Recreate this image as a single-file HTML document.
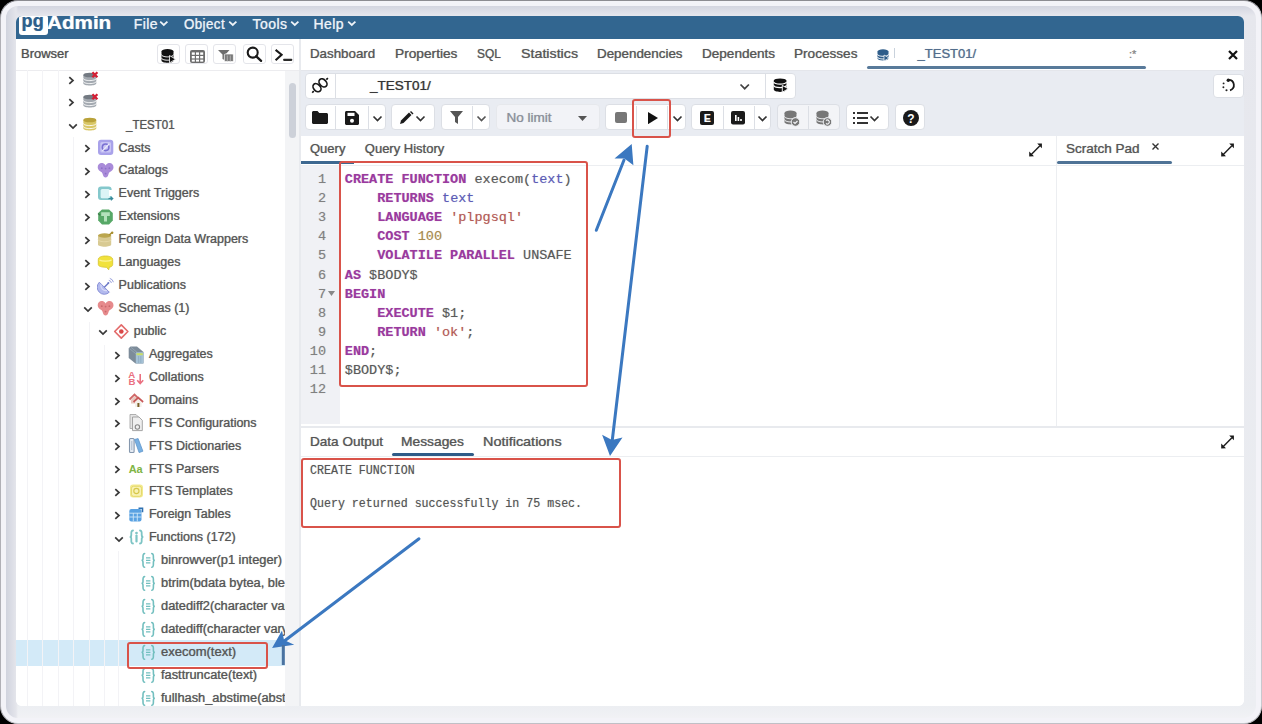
<!DOCTYPE html><html><head><meta charset="utf-8"><style>
html,body{margin:0;padding:0;}
body{width:1262px;height:724px;overflow:hidden;background:#000;position:relative;font-family:'Liberation Sans',sans-serif;}
.t{position:absolute;white-space:pre;-webkit-text-stroke:0.2px currentColor;text-shadow:0 0 0.8px color-mix(in srgb, currentColor 45%, transparent);}
.r{position:absolute;}
#frame{position:absolute;left:0;top:0;width:1262px;height:724px;box-sizing:border-box;border-radius:18px;background:#f3f3f8;border:1px solid #b0b0b6;border-top-color:#8c8c92;border-right-color:#c8c8ce;border-bottom-color:#c0c0c6;}
#bevel{position:absolute;left:6px;top:6px;width:1250px;height:712px;border-radius:13px;background:linear-gradient(180deg,#d3d5e0 0px,#e6e7ed 10px,#eceef2 700px,#f1f2f5 712px);}
#bevelL{position:absolute;left:6px;top:6px;width:12px;height:712px;border-radius:13px 0 0 13px;background:linear-gradient(90deg,#d0d3de 0px,#e4e5eb 10px,rgba(230,231,236,0) 12px);}
#app{position:absolute;left:0;top:0;width:1262px;height:724px;clip-path:inset(16px 18px 18px 16px round 6px);background:#fff;}
</style></head><body><div id="frame"></div><div id="bevel"></div><div id="bevelL"></div><div id="app">
<div class="r" style="left:16.0px;top:16.0px;width:1228.0px;height:23.0px;background:#326690;"></div>
<div class="r" style="left:19.0px;top:15.0px;width:29.0px;height:20.0px;background:#fff;border-radius:3px;"></div>
<div class="t" style="left:21.5px;top:12.0px;font:bold 18px/18px 'Liberation Sans',sans-serif;color:#2c5f8c;letter-spacing:0.2px;">pg</div>
<div class="t" style="left:46.5px;top:14.7px;font:bold 17.5px/17.5px 'Liberation Sans',sans-serif;color:#fff;transform:scaleX(1.1800);transform-origin:0 0;">Admin</div>
<div class="t" style="left:133.7px;top:16.9px;font:normal 14px/14px 'Liberation Sans',sans-serif;color:#eef3f8;letter-spacing:0.45px;">File</div>
<svg class="r" style="left:159.2px;top:19.5px;" width="10" height="7" viewBox="0 0 10 7"><polyline points="1.2,1.6 4.8,5 8.4,1.6" fill="none" stroke="#eef3f8" stroke-width="1.8"/></svg>
<div class="t" style="left:184.0px;top:16.9px;font:normal 14px/14px 'Liberation Sans',sans-serif;color:#eef3f8;letter-spacing:0.45px;transform:scaleX(0.9500);transform-origin:0 0;">Object</div>
<svg class="r" style="left:228.1px;top:19.5px;" width="10" height="7" viewBox="0 0 10 7"><polyline points="1.2,1.6 4.8,5 8.4,1.6" fill="none" stroke="#eef3f8" stroke-width="1.8"/></svg>
<div class="t" style="left:252.6px;top:16.9px;font:normal 14px/14px 'Liberation Sans',sans-serif;color:#eef3f8;letter-spacing:0.45px;">Tools</div>
<svg class="r" style="left:289.5px;top:19.5px;" width="10" height="7" viewBox="0 0 10 7"><polyline points="1.2,1.6 4.8,5 8.4,1.6" fill="none" stroke="#eef3f8" stroke-width="1.8"/></svg>
<div class="t" style="left:313.5px;top:16.9px;font:normal 14px/14px 'Liberation Sans',sans-serif;color:#eef3f8;letter-spacing:0.45px;">Help</div>
<svg class="r" style="left:346.5px;top:19.5px;" width="10" height="7" viewBox="0 0 10 7"><polyline points="1.2,1.6 4.8,5 8.4,1.6" fill="none" stroke="#eef3f8" stroke-width="1.8"/></svg>
<div class="r" style="left:16.0px;top:39.0px;width:284.0px;height:667.0px;background:#fff;"></div>
<div class="t" style="left:21.0px;top:47.0px;font:normal 13px/13px 'Liberation Sans',sans-serif;color:#505050;">Browser</div>
<div class="r" style="left:16.0px;top:69.5px;width:284.0px;height:1.0px;background:#ececef;"></div>
<div class="r" style="left:156.7px;top:43.8px;width:23.0px;height:20.7px;background:#fff;border:1px solid #e4e5ea;border-radius:3px;box-sizing:border-box;"></div>
<div class="r" style="left:184.6px;top:43.8px;width:23.0px;height:20.7px;background:#fff;border:1px solid #e4e5ea;border-radius:3px;box-sizing:border-box;"></div>
<div class="r" style="left:212.9px;top:43.8px;width:23.0px;height:20.7px;background:#fff;border:1px solid #e4e5ea;border-radius:3px;box-sizing:border-box;"></div>
<div class="r" style="left:243.1px;top:43.8px;width:23.0px;height:20.7px;background:#fff;border:1px solid #e4e5ea;border-radius:3px;box-sizing:border-box;"></div>
<div class="r" style="left:271.2px;top:43.8px;width:23.0px;height:20.7px;background:#fff;border:1px solid #e4e5ea;border-radius:3px;box-sizing:border-box;"></div>
<svg class="r" style="left:161.4px;top:48.7px;" width="15" height="14" viewBox="0 0 15 14"><ellipse cx="6.5" cy="2.3" rx="6" ry="2.2" fill="#111"/><path d="M0.5 2.3v9.2c0 1.3 2.7 2.3 6 2.3s6-1 6-2.3V2.3" fill="#111"/><path d="M0.5 5.6c0 1.3 2.7 2.3 6 2.3s6-1 6-2.3M0.5 8.9c0 1.3 2.7 2.3 6 2.3s6-1 6-2.3" stroke="#fff" stroke-width="1" fill="none"/><path d="M8.5 6.5l6 3.7-6 3.7z" fill="#111" stroke="#fff" stroke-width="0.8"/></svg>
<svg class="r" style="left:189.7px;top:50.4px;" width="15" height="13" viewBox="0 0 15 13"><rect x="0" y="0" width="15" height="13" rx="2" fill="#6d6d6d"/><g fill="#fff"><rect x="1.8" y="2.4" width="3" height="2.4"/><rect x="6" y="2.4" width="3" height="2.4"/><rect x="10.2" y="2.4" width="3" height="2.4"/><rect x="1.8" y="6" width="3" height="2.4"/><rect x="6" y="6" width="3" height="2.4"/><rect x="10.2" y="6" width="3" height="2.4"/><rect x="1.8" y="9.6" width="3" height="2"/><rect x="6" y="9.6" width="3" height="2"/><rect x="10.2" y="9.6" width="3" height="2"/></g></svg>
<svg class="r" style="left:218.3px;top:50.1px;" width="16" height="12" viewBox="0 0 16 12"><path d="M0 0h11.5l-4 4.5V10.5l-3-1.5V4.5z" fill="#6d6d6d"/><rect x="6.4" y="4" width="9" height="7.5" rx="1" fill="#7a7a7a" stroke="#fff" stroke-width="0.7"/><path d="M9.3 5.5v6M12.3 5.5v6" stroke="#bbb" stroke-width="0.8"/></svg>
<svg class="r" style="left:245.0px;top:44.5px;" width="18" height="18" viewBox="0 0 18 18"><circle cx="7.7" cy="7.6" r="5" fill="none" stroke="#1a1a1a" stroke-width="2.1"/><path d="M11.3 11.3l4.8 4.6" stroke="#1a1a1a" stroke-width="2.3" stroke-linecap="round"/></svg>
<svg class="r" style="left:273.5px;top:47.5px;" width="20" height="14" viewBox="0 0 20 14"><polyline points="1.6,1.9 7.6,6.7 1.6,12.2" fill="none" stroke="#1a1a1a" stroke-width="2.1" stroke-linejoin="miter"/><rect x="9.1" y="10.7" width="9.2" height="2.2" rx="0.8" fill="#2a2a2a"/></svg>
<div class="r" style="left:285.0px;top:70.5px;width:14.0px;height:635.5px;background:#f3f4f6;"></div>
<div class="r" style="left:289.3px;top:83.0px;width:7.2px;height:55.0px;background:#cdd1d9;border-radius:4px;"></div>
<div class="r" style="left:299.0px;top:39.0px;width:1.5px;height:667.0px;background:#e8eaee;"></div>
<div style="position:absolute;left:0;top:0;width:285px;height:706px;overflow:hidden;">
<div class="r" style="left:16.0px;top:640.4px;width:269.0px;height:25.9px;background:#d3eaf8;"></div>
<div class="r" style="left:26.5px;top:70.0px;width:1.0px;height:636.0px;background:#f3f3f6;"></div>
<div class="r" style="left:42.0px;top:70.0px;width:1.0px;height:636.0px;background:#f3f3f6;"></div>
<div class="r" style="left:57.5px;top:70.0px;width:1.0px;height:636.0px;background:#f3f3f6;"></div>
<div class="r" style="left:73.0px;top:137.0px;width:1.0px;height:569.0px;background:#f3f3f6;"></div>
<div class="r" style="left:88.5px;top:322.0px;width:1.0px;height:384.0px;background:#f3f3f6;"></div>
<div class="r" style="left:104.0px;top:345.0px;width:1.0px;height:361.0px;background:#f3f3f6;"></div>
<div class="r" style="left:118.3px;top:551.0px;width:1.0px;height:155.0px;background:#f3f3f6;"></div>
<svg class="r" style="left:68.4px;top:75.5px;" width="7" height="9" viewBox="0 0 7 9"><polyline points="1.3,1.2 5,4.5 1.3,7.8" fill="none" stroke="#3a3a3a" stroke-width="1.7" stroke-linejoin="miter"/></svg>
<svg class="r" style="left:82.3px;top:70.5px" width="18" height="18" viewBox="0 0 18 18"><g transform="translate(1,1)"><path d="M0.3 3v8.3c0 1.3 2.9 2.3 6.5 2.3s6.5-1 6.5-2.3V3z" fill="#a3a9b0"/><ellipse cx="6.8" cy="3" rx="6.5" ry="2.3" fill="#737a82"/><path d="M0.3 6.3c0 1.3 2.9 2.3 6.5 2.3s6.5-1 6.5-2.3M0.3 9.3c0 1.3 2.9 2.3 6.5 2.3s6.5-1 6.5-2.3" fill="none" stroke="#fff" stroke-width="0.9"/><path d="M9.4 0.2l5 5M14.4 0.2l-5 5" stroke="#d41f35" stroke-width="2.3"/></g></svg>
<svg class="r" style="left:68.4px;top:98.4px;" width="7" height="9" viewBox="0 0 7 9"><polyline points="1.3,1.2 5,4.5 1.3,7.8" fill="none" stroke="#3a3a3a" stroke-width="1.7" stroke-linejoin="miter"/></svg>
<svg class="r" style="left:82.3px;top:93.4px" width="18" height="18" viewBox="0 0 18 18"><g transform="translate(1,1)"><path d="M0.3 3v8.3c0 1.3 2.9 2.3 6.5 2.3s6.5-1 6.5-2.3V3z" fill="#a3a9b0"/><ellipse cx="6.8" cy="3" rx="6.5" ry="2.3" fill="#737a82"/><path d="M0.3 6.3c0 1.3 2.9 2.3 6.5 2.3s6.5-1 6.5-2.3M0.3 9.3c0 1.3 2.9 2.3 6.5 2.3s6.5-1 6.5-2.3" fill="none" stroke="#fff" stroke-width="0.9"/><path d="M9.4 0.2l5 5M14.4 0.2l-5 5" stroke="#d41f35" stroke-width="2.3"/></g></svg>
<svg class="r" style="left:67.9px;top:122.9px;" width="10" height="7" viewBox="0 0 10 7"><polyline points="1.2,1.3 5,5 8.8,1.3" fill="none" stroke="#3a3a3a" stroke-width="1.7"/></svg>
<svg class="r" style="left:82.3px;top:116.4px" width="18" height="18" viewBox="0 0 18 18"><g transform="translate(1,1)"><path d="M0.3 3v8.3c0 1.3 2.9 2.3 6.5 2.3s6.5-1 6.5-2.3V3z" fill="#d9c766"/><ellipse cx="6.8" cy="3" rx="6.5" ry="2.3" fill="#b9a23a"/><path d="M0.3 6.3c0 1.3 2.9 2.3 6.5 2.3s6.5-1 6.5-2.3M0.3 9.3c0 1.3 2.9 2.3 6.5 2.3s6.5-1 6.5-2.3" fill="none" stroke="#fff" stroke-width="0.9"/></g></svg>
<div class="t" style="left:125.5px;top:118.5px;font:normal 12.5px/12.5px 'Liberation Sans',sans-serif;color:#555;transform:scaleX(0.9200);transform-origin:0 0;">_TEST01</div>
<svg class="r" style="left:83.5px;top:144.3px;" width="7" height="9" viewBox="0 0 7 9"><polyline points="1.3,1.2 5,4.5 1.3,7.8" fill="none" stroke="#3a3a3a" stroke-width="1.7" stroke-linejoin="miter"/></svg>
<svg class="r" style="left:97.0px;top:139.3px" width="18" height="18" viewBox="0 0 18 18"><g transform="translate(1,1)"><rect x="0" y="-0.3" width="15.3" height="15.2" rx="3" fill="#a9a2ea"/><rect x="2.3" y="2" width="10.7" height="10.6" rx="1.5" fill="#c9c5f4"/><circle cx="7.6" cy="7.3" r="3.3" fill="none" stroke="#7a70d2" stroke-width="1.6"/><path d="M4.3 11l6.8-7" stroke="#ecebfc" stroke-width="1.1"/></g></svg>
<div class="t" style="left:118.6px;top:141.5px;font:normal 12.5px/12.5px 'Liberation Sans',sans-serif;color:#555;">Casts</div>
<svg class="r" style="left:83.5px;top:167.2px;" width="7" height="9" viewBox="0 0 7 9"><polyline points="1.3,1.2 5,4.5 1.3,7.8" fill="none" stroke="#3a3a3a" stroke-width="1.7" stroke-linejoin="miter"/></svg>
<svg class="r" style="left:97.0px;top:162.2px" width="18" height="18" viewBox="0 0 18 18"><g transform="translate(1,1)"><path d="M7.6 2.6C6.6 0.3 4.8 0 3.6 0 1.4 0 -0.3 1.8 -0.3 4.2c0 2.4 1.6 3.6 3.2 4.6 1.3.8 1.6 1.6 1.9 2.8.4 1.8 1.5 3 2.8 3s2.4-1.2 2.8-3c.3-1.2.6-2 1.9-2.8 1.6-1 3.2-2.2 3.2-4.6C15.5 1.8 13.8 0 11.6 0 10.4 0 8.6.3 7.6 2.6z" fill="#a98bd9"/><g fill="#8d70c8"><circle cx="3.8" cy="5.2" r="0.9"/><circle cx="7.6" cy="5.6" r="0.9"/><circle cx="11.4" cy="5.2" r="0.9"/><circle cx="7.6" cy="10.6" r="0.9"/></g></g></svg>
<div class="t" style="left:118.6px;top:164.4px;font:normal 12.5px/12.5px 'Liberation Sans',sans-serif;color:#555;">Catalogs</div>
<svg class="r" style="left:83.5px;top:190.2px;" width="7" height="9" viewBox="0 0 7 9"><polyline points="1.3,1.2 5,4.5 1.3,7.8" fill="none" stroke="#3a3a3a" stroke-width="1.7" stroke-linejoin="miter"/></svg>
<svg class="r" style="left:97.0px;top:185.2px" width="18" height="18" viewBox="0 0 18 18"><g transform="translate(1,1)"><rect x="0" y="0.5" width="13.6" height="13.6" rx="3" fill="#84c8cc"/><rect x="2.6" y="3" width="9.3" height="9.3" rx="1.5" fill="#dcf4f6"/><rect x="11" y="4" width="4" height="6" fill="#fff"/><path d="M10.5 12.6h3.5M12.8 11l1.8 1.6-1.8 1.6" fill="none" stroke="#3b8a9a" stroke-width="1.4"/></g></svg>
<div class="t" style="left:118.6px;top:187.3px;font:normal 12.5px/12.5px 'Liberation Sans',sans-serif;color:#555;">Event Triggers</div>
<svg class="r" style="left:83.5px;top:213.1px;" width="7" height="9" viewBox="0 0 7 9"><polyline points="1.3,1.2 5,4.5 1.3,7.8" fill="none" stroke="#3a3a3a" stroke-width="1.7" stroke-linejoin="miter"/></svg>
<svg class="r" style="left:97.0px;top:208.1px" width="18" height="18" viewBox="0 0 18 18"><g transform="translate(1,1)"><path d="M4 0.5h7l3.8 3.5v7.5L11 15.5H4L0.2 11.5V4z" fill="#57a867"/><path d="M3.2 3.3h8.6v3.6H9v5.6H6V6.9H3.2z" fill="#b4e2bb"/><path d="M0 4.5l2.2 1.8" stroke="#3c7a48" stroke-width="1.2"/></g></svg>
<div class="t" style="left:118.6px;top:210.3px;font:normal 12.5px/12.5px 'Liberation Sans',sans-serif;color:#555;">Extensions</div>
<svg class="r" style="left:83.5px;top:236.0px;" width="7" height="9" viewBox="0 0 7 9"><polyline points="1.3,1.2 5,4.5 1.3,7.8" fill="none" stroke="#3a3a3a" stroke-width="1.7" stroke-linejoin="miter"/></svg>
<svg class="r" style="left:97.0px;top:231.0px" width="18" height="18" viewBox="0 0 18 18"><g transform="translate(1,1)"><path d="M0 3.5v9c0 1.3 3 2.2 6.6 2.2s6.6-.9 6.6-2.2v-9z" fill="#d8ca93"/><ellipse cx="6.6" cy="3.5" rx="6.6" ry="2.2" fill="#bba64e"/><path d="M0 7.5c0 1.3 3 2.2 6.6 2.2s6.6-.9 6.6-2.2" fill="none" stroke="#e8dcae" stroke-width="0.8"/><path d="M11.2 3l2.8-2.4" stroke="#a88f2e" stroke-width="1.5"/><circle cx="14.2" cy="0.8" r="1.2" fill="#a88f2e"/></g></svg>
<div class="t" style="left:118.6px;top:233.2px;font:normal 12.5px/12.5px 'Liberation Sans',sans-serif;color:#555;">Foreign Data Wrappers</div>
<svg class="r" style="left:83.5px;top:258.9px;" width="7" height="9" viewBox="0 0 7 9"><polyline points="1.3,1.2 5,4.5 1.3,7.8" fill="none" stroke="#3a3a3a" stroke-width="1.7" stroke-linejoin="miter"/></svg>
<svg class="r" style="left:97.0px;top:253.9px" width="18" height="18" viewBox="0 0 18 18"><g transform="translate(1,1)"><path d="M0.3 4.5C0.3 2.2 3.4 1 7.5 1s7.2 1.2 7.2 3.5v5c0 1.6-1.7 2.5-3.4 2.7l-0.6 2.6-2.2-2.5C3.6 12.2 0.3 11.4 0.3 9.5z" fill="#f1e23c" stroke="#d5c42c" stroke-width="0.8"/><path d="M1.5 5.2c2.5 1.2 9.5 1.2 12 0" stroke="#fbf49a" stroke-width="1.3" fill="none"/></g></svg>
<div class="t" style="left:118.6px;top:256.1px;font:normal 12.5px/12.5px 'Liberation Sans',sans-serif;color:#555;">Languages</div>
<svg class="r" style="left:83.5px;top:281.9px;" width="7" height="9" viewBox="0 0 7 9"><polyline points="1.3,1.2 5,4.5 1.3,7.8" fill="none" stroke="#3a3a3a" stroke-width="1.7" stroke-linejoin="miter"/></svg>
<svg class="r" style="left:97.0px;top:276.9px" width="18" height="18" viewBox="0 0 18 18"><g transform="translate(1,1)"><path d="M1.3 4.2A7 7 0 0 0 11.3 14.2Z" fill="#b3baee" stroke="#8890d6" stroke-width="1"/><path d="M3 6.5A5 5 0 0 0 9 12.5" fill="none" stroke="#d8dcf8" stroke-width="1.2"/><path d="M6.3 9.2l4-4" stroke="#6c78c6" stroke-width="1.4"/><circle cx="10.4" cy="5.1" r="1" fill="#6c78c6"/><path d="M10.8 2.4a3 3 0 0 1 2.6 2.6M11.8 0.4a5 5 0 0 1 3.6 3.8" fill="none" stroke="#9aa2dc" stroke-width="1"/></g></svg>
<div class="t" style="left:118.6px;top:279.0px;font:normal 12.5px/12.5px 'Liberation Sans',sans-serif;color:#555;">Publications</div>
<svg class="r" style="left:83.0px;top:306.3px;" width="10" height="7" viewBox="0 0 10 7"><polyline points="1.2,1.3 5,5 8.8,1.3" fill="none" stroke="#3a3a3a" stroke-width="1.7"/></svg>
<svg class="r" style="left:97.0px;top:299.8px" width="18" height="18" viewBox="0 0 18 18"><g transform="translate(1,1)"><path d="M7.6 2.6C6.6 0.3 4.8 0 3.6 0 1.4 0 -0.3 1.8 -0.3 4.2c0 2.4 1.6 3.6 3.2 4.6 1.3.8 1.6 1.6 1.9 2.8.4 1.8 1.5 3 2.8 3s2.4-1.2 2.8-3c.3-1.2.6-2 1.9-2.8 1.6-1 3.2-2.2 3.2-4.6C15.5 1.8 13.8 0 11.6 0 10.4 0 8.6.3 7.6 2.6z" fill="#e68a8c"/><g fill="#c96a6c"><circle cx="3.8" cy="5.2" r="0.9"/><circle cx="7.6" cy="5.6" r="0.9"/><circle cx="11.4" cy="5.2" r="0.9"/><circle cx="7.6" cy="10.6" r="0.9"/></g></g></svg>
<div class="t" style="left:118.6px;top:302.0px;font:normal 12.5px/12.5px 'Liberation Sans',sans-serif;color:#555;">Schemas (1)</div>
<svg class="r" style="left:97.5px;top:329.2px;" width="10" height="7" viewBox="0 0 10 7"><polyline points="1.2,1.3 5,5 8.8,1.3" fill="none" stroke="#3a3a3a" stroke-width="1.7"/></svg>
<svg class="r" style="left:113.0px;top:322.7px" width="18" height="18" viewBox="0 0 18 18"><g transform="translate(1,1)"><path d="M7.3 0.9l6.6 6.6-6.6 6.6L0.7 7.5z" fill="#fff" stroke="#e36a6a" stroke-width="1.6" stroke-linejoin="round"/><circle cx="7.3" cy="7.5" r="2.3" fill="#d94848"/></g></svg>
<div class="t" style="left:133.7px;top:324.9px;font:normal 12.5px/12.5px 'Liberation Sans',sans-serif;color:#555;">public</div>
<svg class="r" style="left:114.3px;top:350.7px;" width="7" height="9" viewBox="0 0 7 9"><polyline points="1.3,1.2 5,4.5 1.3,7.8" fill="none" stroke="#3a3a3a" stroke-width="1.7" stroke-linejoin="miter"/></svg>
<svg class="r" style="left:128.0px;top:345.7px" width="18" height="18" viewBox="0 0 18 18"><g transform="translate(1,1)"><path d="M1.5 -0.5h6.5l6.5 5.5v11.5H6.5L-0.3 11V1.3z" fill="#7d8c9a"/><path d="M0.5 1.5l6 5M2 0.3l6 5" stroke="#9cadbb" stroke-width="0.7"/><rect x="6.8" y="5.2" width="7.7" height="11.2" rx="1" fill="#a6c2d6"/><rect x="7.5" y="6.2" width="6.3" height="2" fill="#c9de63"/><path d="M9.6 9v7M11.8 9v7" stroke="#8aa8be" stroke-width="0.7"/></g></svg>
<div class="t" style="left:148.9px;top:347.8px;font:normal 12.5px/12.5px 'Liberation Sans',sans-serif;color:#555;">Aggregates</div>
<svg class="r" style="left:114.3px;top:373.6px;" width="7" height="9" viewBox="0 0 7 9"><polyline points="1.3,1.2 5,4.5 1.3,7.8" fill="none" stroke="#3a3a3a" stroke-width="1.7" stroke-linejoin="miter"/></svg>
<svg class="r" style="left:128.0px;top:368.6px" width="18" height="18" viewBox="0 0 18 18"><g transform="translate(1,1)"><text x="-0.8" y="7.6" font-family="Liberation Sans" font-weight="bold" font-size="9.6" fill="#ea7080">A</text><text x="-0.6" y="15.4" font-family="Liberation Sans" font-weight="bold" font-size="9.6" fill="#ea7080">B</text><path d="M11.2 4v9.3M8.2 10.3l3 3.2 3-3.2" fill="none" stroke="#ea7080" stroke-width="1.6"/></g></svg>
<div class="t" style="left:148.9px;top:370.8px;font:normal 12.5px/12.5px 'Liberation Sans',sans-serif;color:#555;">Collations</div>
<svg class="r" style="left:114.3px;top:396.5px;" width="7" height="9" viewBox="0 0 7 9"><polyline points="1.3,1.2 5,4.5 1.3,7.8" fill="none" stroke="#3a3a3a" stroke-width="1.7" stroke-linejoin="miter"/></svg>
<svg class="r" style="left:128.0px;top:391.5px" width="18" height="18" viewBox="0 0 18 18"><g transform="translate(1,1)"><path d="M0.5 6.5l5-5 5 5" fill="none" stroke="#d06868" stroke-width="1.8"/><path d="M2 6.5v4h7v-4L5.5 3z" fill="#e8c8c0"/><path d="M4.5 9l4.8-4.2 4.8 4.2" fill="none" stroke="#c85858" stroke-width="1.8"/><path d="M6 9v5h6.6V9L9.3 6z" fill="#f4f0ea"/><rect x="8.4" y="10" width="2" height="4" fill="#7a6028"/></g></svg>
<div class="t" style="left:148.9px;top:393.7px;font:normal 12.5px/12.5px 'Liberation Sans',sans-serif;color:#555;">Domains</div>
<svg class="r" style="left:114.3px;top:419.4px;" width="7" height="9" viewBox="0 0 7 9"><polyline points="1.3,1.2 5,4.5 1.3,7.8" fill="none" stroke="#3a3a3a" stroke-width="1.7" stroke-linejoin="miter"/></svg>
<svg class="r" style="left:128.0px;top:414.4px" width="18" height="18" viewBox="0 0 18 18"><g transform="translate(1,1)"><path d="M1 -0.5h6l3 3v11H1z" fill="#e4e4e4" stroke="#a8a8a8" stroke-width="0.9"/><path d="M3.5 2h6.5l3.3 3.3v10.3H3.5z" fill="#efefef" stroke="#9c9c9c" stroke-width="0.9"/><circle cx="8.4" cy="12" r="2.2" fill="none" stroke="#888" stroke-width="1.1"/></g></svg>
<div class="t" style="left:148.9px;top:416.6px;font:normal 12.5px/12.5px 'Liberation Sans',sans-serif;color:#555;">FTS Configurations</div>
<svg class="r" style="left:114.3px;top:442.4px;" width="7" height="9" viewBox="0 0 7 9"><polyline points="1.3,1.2 5,4.5 1.3,7.8" fill="none" stroke="#3a3a3a" stroke-width="1.7" stroke-linejoin="miter"/></svg>
<svg class="r" style="left:128.0px;top:437.4px" width="18" height="18" viewBox="0 0 18 18"><g transform="translate(1,1)"><rect x="0.5" y="0.5" width="4.6" height="14" rx="1" fill="#e4eaf2" stroke="#8597ad" stroke-width="1.1"/><path d="M2.8 3v9" stroke="#a8b8cc" stroke-width="1"/><path d="M5.5 1.5l3.6-0.9 4.8 12.6-3.8 1.4z" fill="#78b0e2" stroke="#5f95cc" stroke-width="0.8"/></g></svg>
<div class="t" style="left:148.9px;top:439.6px;font:normal 12.5px/12.5px 'Liberation Sans',sans-serif;color:#555;">FTS Dictionaries</div>
<svg class="r" style="left:114.3px;top:465.3px;" width="7" height="9" viewBox="0 0 7 9"><polyline points="1.3,1.2 5,4.5 1.3,7.8" fill="none" stroke="#3a3a3a" stroke-width="1.7" stroke-linejoin="miter"/></svg>
<svg class="r" style="left:128.0px;top:460.3px" width="18" height="18" viewBox="0 0 18 18"><g transform="translate(1,1)"><text x="-0.2" y="12" font-family="Liberation Sans" font-weight="bold" font-size="11" fill="#7fb545" letter-spacing="-0.2">Aa</text></g></svg>
<div class="t" style="left:148.9px;top:462.5px;font:normal 12.5px/12.5px 'Liberation Sans',sans-serif;color:#555;">FTS Parsers</div>
<svg class="r" style="left:114.3px;top:488.2px;" width="7" height="9" viewBox="0 0 7 9"><polyline points="1.3,1.2 5,4.5 1.3,7.8" fill="none" stroke="#3a3a3a" stroke-width="1.7" stroke-linejoin="miter"/></svg>
<svg class="r" style="left:128.0px;top:483.2px" width="18" height="18" viewBox="0 0 18 18"><g transform="translate(1,1)"><rect x="1" y="0.5" width="13" height="13" rx="3" fill="#f2ea8e"/><rect x="2.5" y="2.3" width="10" height="10" rx="2" fill="#f8f2b4" stroke="#e0d260" stroke-width="0.8"/><circle cx="7.4" cy="7" r="2.6" fill="none" stroke="#d6c648" stroke-width="1.1"/></g></svg>
<div class="t" style="left:148.9px;top:485.4px;font:normal 12.5px/12.5px 'Liberation Sans',sans-serif;color:#555;">FTS Templates</div>
<svg class="r" style="left:114.3px;top:511.2px;" width="7" height="9" viewBox="0 0 7 9"><polyline points="1.3,1.2 5,4.5 1.3,7.8" fill="none" stroke="#3a3a3a" stroke-width="1.7" stroke-linejoin="miter"/></svg>
<svg class="r" style="left:128.0px;top:506.2px" width="18" height="18" viewBox="0 0 18 18"><g transform="translate(1,1)"><rect x="0.3" y="2" width="12.2" height="12.6" rx="2" fill="#5aa2e2"/><path d="M0.3 6.2h12.2M0.3 10h12.2M4.3 6v8.5M8.3 6v8.5" stroke="#cfe6f8" stroke-width="0.9"/><path d="M9.5 1.2h4v4" fill="none" stroke="#2f70b0" stroke-width="1.6"/></g></svg>
<div class="t" style="left:148.9px;top:508.3px;font:normal 12.5px/12.5px 'Liberation Sans',sans-serif;color:#555;">Foreign Tables</div>
<svg class="r" style="left:113.8px;top:535.6px;" width="10" height="7" viewBox="0 0 10 7"><polyline points="1.2,1.3 5,5 8.8,1.3" fill="none" stroke="#3a3a3a" stroke-width="1.7"/></svg>
<svg class="r" style="left:128.0px;top:529.1px" width="18" height="18" viewBox="0 0 18 18"><g transform="translate(1,1)" fill="none" stroke="#7cc4c4" stroke-width="1.8" stroke-linecap="round"><path d="M4 0.5C2 0.5 2.3 3 2.3 5S1.5 7 0.7 7c.8 0 1.6 0 1.6 2s-.3 4.5 1.7 4.5"/><path d="M11 0.5c2 0 1.7 2.5 1.7 4.5S13.5 7 14.3 7c-.8 0-1.6 0-1.6 2s.3 4.5-1.7 4.5"/><path d="M7.5 5.5v6" stroke-width="2.2"/><circle cx="7.5" cy="3" r="0.6" stroke-width="1.5"/></g></svg>
<div class="t" style="left:148.9px;top:531.3px;font:normal 12.5px/12.5px 'Liberation Sans',sans-serif;color:#555;">Functions (172)</div>
<svg class="r" style="left:139.6px;top:552.0px" width="18" height="18" viewBox="0 0 18 18"><g transform="translate(1,1)" fill="none" stroke="#72bfbf" stroke-width="1.6" stroke-linecap="round"><path d="M3.6 0.6C1.8 0.6 2 3 2 5.2S1.3 7.2 0.5 7.2c.8 0 1.5 0 1.5 2.2s-.2 4.8 1.6 4.8"/><path d="M10.8 0.6c1.8 0 1.6 2.4 1.6 4.6s.7 2 1.5 2c-.8 0-1.5 0-1.5 2.2s.2 4.8-1.6 4.8"/><path d="M5 4.8h4.4M5 7.3h4.4M5 9.8h4.4" stroke-width="1.2" stroke-linecap="butt"/></g></svg>
<div class="t" style="left:160.5px;top:554.2px;font:normal 12.5px/12.5px 'Liberation Sans',sans-serif;color:#555;transform:scaleX(1.0250);transform-origin:0 0;">binrowver(p1 integer)</div>
<svg class="r" style="left:139.6px;top:575.0px" width="18" height="18" viewBox="0 0 18 18"><g transform="translate(1,1)" fill="none" stroke="#72bfbf" stroke-width="1.6" stroke-linecap="round"><path d="M3.6 0.6C1.8 0.6 2 3 2 5.2S1.3 7.2 0.5 7.2c.8 0 1.5 0 1.5 2.2s-.2 4.8 1.6 4.8"/><path d="M10.8 0.6c1.8 0 1.6 2.4 1.6 4.6s.7 2 1.5 2c-.8 0-1.5 0-1.5 2.2s.2 4.8-1.6 4.8"/><path d="M5 4.8h4.4M5 7.3h4.4M5 9.8h4.4" stroke-width="1.2" stroke-linecap="butt"/></g></svg>
<div class="t" style="left:160.5px;top:577.1px;font:normal 12.5px/12.5px 'Liberation Sans',sans-serif;color:#555;transform:scaleX(1.0250);transform-origin:0 0;">btrim(bdata bytea, blen integer)</div>
<svg class="r" style="left:139.6px;top:597.9px" width="18" height="18" viewBox="0 0 18 18"><g transform="translate(1,1)" fill="none" stroke="#72bfbf" stroke-width="1.6" stroke-linecap="round"><path d="M3.6 0.6C1.8 0.6 2 3 2 5.2S1.3 7.2 0.5 7.2c.8 0 1.5 0 1.5 2.2s-.2 4.8 1.6 4.8"/><path d="M10.8 0.6c1.8 0 1.6 2.4 1.6 4.6s.7 2 1.5 2c-.8 0-1.5 0-1.5 2.2s.2 4.8-1.6 4.8"/><path d="M5 4.8h4.4M5 7.3h4.4M5 9.8h4.4" stroke-width="1.2" stroke-linecap="butt"/></g></svg>
<div class="t" style="left:160.5px;top:600.1px;font:normal 12.5px/12.5px 'Liberation Sans',sans-serif;color:#555;transform:scaleX(1.0250);transform-origin:0 0;">datediff2(character varying)</div>
<svg class="r" style="left:139.6px;top:620.8px" width="18" height="18" viewBox="0 0 18 18"><g transform="translate(1,1)" fill="none" stroke="#72bfbf" stroke-width="1.6" stroke-linecap="round"><path d="M3.6 0.6C1.8 0.6 2 3 2 5.2S1.3 7.2 0.5 7.2c.8 0 1.5 0 1.5 2.2s-.2 4.8 1.6 4.8"/><path d="M10.8 0.6c1.8 0 1.6 2.4 1.6 4.6s.7 2 1.5 2c-.8 0-1.5 0-1.5 2.2s.2 4.8-1.6 4.8"/><path d="M5 4.8h4.4M5 7.3h4.4M5 9.8h4.4" stroke-width="1.2" stroke-linecap="butt"/></g></svg>
<div class="t" style="left:160.5px;top:623.0px;font:normal 12.5px/12.5px 'Liberation Sans',sans-serif;color:#555;transform:scaleX(1.0250);transform-origin:0 0;">datediff(character varying)</div>
<svg class="r" style="left:139.6px;top:643.8px" width="18" height="18" viewBox="0 0 18 18"><g transform="translate(1,1)" fill="none" stroke="#72bfbf" stroke-width="1.6" stroke-linecap="round"><path d="M3.6 0.6C1.8 0.6 2 3 2 5.2S1.3 7.2 0.5 7.2c.8 0 1.5 0 1.5 2.2s-.2 4.8 1.6 4.8"/><path d="M10.8 0.6c1.8 0 1.6 2.4 1.6 4.6s.7 2 1.5 2c-.8 0-1.5 0-1.5 2.2s.2 4.8-1.6 4.8"/><path d="M5 4.8h4.4M5 7.3h4.4M5 9.8h4.4" stroke-width="1.2" stroke-linecap="butt"/></g></svg>
<div class="t" style="left:160.5px;top:645.9px;font:normal 12.5px/12.5px 'Liberation Sans',sans-serif;color:#555;transform:scaleX(1.0400);transform-origin:0 0;">execom(text)</div>
<svg class="r" style="left:139.6px;top:666.7px" width="18" height="18" viewBox="0 0 18 18"><g transform="translate(1,1)" fill="none" stroke="#72bfbf" stroke-width="1.6" stroke-linecap="round"><path d="M3.6 0.6C1.8 0.6 2 3 2 5.2S1.3 7.2 0.5 7.2c.8 0 1.5 0 1.5 2.2s-.2 4.8 1.6 4.8"/><path d="M10.8 0.6c1.8 0 1.6 2.4 1.6 4.6s.7 2 1.5 2c-.8 0-1.5 0-1.5 2.2s.2 4.8-1.6 4.8"/><path d="M5 4.8h4.4M5 7.3h4.4M5 9.8h4.4" stroke-width="1.2" stroke-linecap="butt"/></g></svg>
<div class="t" style="left:160.5px;top:668.9px;font:normal 12.5px/12.5px 'Liberation Sans',sans-serif;color:#555;transform:scaleX(1.0250);transform-origin:0 0;">fasttruncate(text)</div>
<svg class="r" style="left:139.6px;top:689.6px" width="18" height="18" viewBox="0 0 18 18"><g transform="translate(1,1)" fill="none" stroke="#72bfbf" stroke-width="1.6" stroke-linecap="round"><path d="M3.6 0.6C1.8 0.6 2 3 2 5.2S1.3 7.2 0.5 7.2c.8 0 1.5 0 1.5 2.2s-.2 4.8 1.6 4.8"/><path d="M10.8 0.6c1.8 0 1.6 2.4 1.6 4.6s.7 2 1.5 2c-.8 0-1.5 0-1.5 2.2s.2 4.8-1.6 4.8"/><path d="M5 4.8h4.4M5 7.3h4.4M5 9.8h4.4" stroke-width="1.2" stroke-linecap="butt"/></g></svg>
<div class="t" style="left:160.5px;top:691.8px;font:normal 12.5px/12.5px 'Liberation Sans',sans-serif;color:#555;transform:scaleX(1.0250);transform-origin:0 0;">fullhash_abstime(abstime)</div>
</div>
<div class="r" style="left:300.5px;top:39.0px;width:943.5px;height:31.0px;background:#fff;"></div>
<div class="t" style="left:310.1px;top:47.2px;font:normal 13px/13px 'Liberation Sans',sans-serif;color:#555;transform:scaleX(1.0250);transform-origin:0 0;">Dashboard</div>
<div class="t" style="left:394.9px;top:47.2px;font:normal 13px/13px 'Liberation Sans',sans-serif;color:#555;transform:scaleX(1.0540);transform-origin:0 0;">Properties</div>
<div class="t" style="left:477.0px;top:47.2px;font:normal 13px/13px 'Liberation Sans',sans-serif;color:#555;transform:scaleX(0.9150);transform-origin:0 0;">SQL</div>
<div class="t" style="left:521.0px;top:47.2px;font:normal 13px/13px 'Liberation Sans',sans-serif;color:#555;transform:scaleX(1.0960);transform-origin:0 0;">Statistics</div>
<div class="t" style="left:597.1px;top:47.2px;font:normal 13px/13px 'Liberation Sans',sans-serif;color:#555;transform:scaleX(1.0290);transform-origin:0 0;">Dependencies</div>
<div class="t" style="left:701.5px;top:47.2px;font:normal 13px/13px 'Liberation Sans',sans-serif;color:#555;transform:scaleX(1.0430);transform-origin:0 0;">Dependents</div>
<div class="t" style="left:793.5px;top:47.2px;font:normal 13px/13px 'Liberation Sans',sans-serif;color:#555;transform:scaleX(1.0450);transform-origin:0 0;">Processes</div>
<div class="r" style="left:867.0px;top:66.0px;width:279.0px;height:3.0px;background:#587a9a;border-radius:1.5px;"></div>
<div class="t" style="left:917.6px;top:47.2px;font:normal 13px/13px 'Liberation Sans',sans-serif;color:#526d8c;">_TEST01/</div>
<div class="t" style="left:1129.0px;top:48.9px;font:normal 11px/11px 'Liberation Sans',sans-serif;color:#888;">:*</div>
<div class="r" style="left:893.5px;top:48.0px;width:1.0px;height:10.0px;background:#c9d2dc;"></div>
<svg class="r" style="left:876.7px;top:48.8px;" width="13" height="12" viewBox="0 0 13 12"><ellipse cx="6" cy="2.5" rx="5.5" ry="2.2" fill="#2f5d8a"/><path d="M0.5 2.5v7c0 1.2 2.5 2 5.5 2s5.5-.8 5.5-2v-7" fill="#2f5d8a"/><path d="M0.5 5.3c0 1.2 2.5 2 5.5 2s5.5-.8 5.5-2M0.5 8c0 1.2 2.5 2 5.5 2s5.5-.8 5.5-2" stroke="#fff" stroke-width="0.9" fill="none"/><path d="M7 6l5 3-5 3z" fill="#2f5d8a" stroke="#fff" stroke-width="0.7"/></svg>
<svg class="r" style="left:1227.5px;top:50.0px;" width="10" height="10" viewBox="0 0 10 10"><path d="M1 1l8 8M9 1l-8 8" stroke="#111" stroke-width="2.2"/></svg>
<div class="r" style="left:300.5px;top:69.5px;width:943.5px;height:1.0px;background:#e4e6eb;"></div>
<div class="r" style="left:300.5px;top:70.5px;width:943.5px;height:65.0px;background:#e9ecf2;"></div>
<div class="r" style="left:304.8px;top:73.0px;width:491.2px;height:25.6px;background:#fff;border:1px solid #dcdfe5;border-radius:4px;box-sizing:border-box;"></div>
<div class="r" style="left:335.2px;top:74.0px;width:1.0px;height:24.5px;background:#dcdfe5;"></div>
<div class="r" style="left:765.0px;top:74.0px;width:1.0px;height:24.5px;background:#dcdfe5;"></div>
<div class="t" style="left:370.0px;top:79.0px;font:normal 13.5px/13.5px 'Liberation Sans',sans-serif;color:#333;">_TEST01/</div>
<svg class="r" style="left:739.0px;top:82.5px;" width="12" height="8" viewBox="0 0 12 8"><polyline points="1.5,1.5 5.7,5.7 9.9,1.5" fill="none" stroke="#444" stroke-width="1.7"/></svg>
<svg class="r" style="left:773.0px;top:77.5px;" width="16" height="16" viewBox="0 0 16 16"><path d="M0.8 2.6v9c0 1.3 2.8 2.3 6.3 2.3s6.3-1 6.3-2.3v-9z" fill="#111"/><ellipse cx="7.1" cy="2.6" rx="6.3" ry="2.2" fill="#111"/><path d="M0.8 3.9c0 1.3 2.8 2.3 6.3 2.3s6.3-1 6.3-2.3M0.8 7.3c0 1.3 2.8 2.3 6.3 2.3s6.3-1 6.3-2.3" stroke="#fff" stroke-width="1.2" fill="none"/><path d="M9.3 7.4l6 3.4-6 3.4z" fill="#111" stroke="#fff" stroke-width="0.9"/></svg>
<svg class="r" style="left:310.0px;top:76.0px;" width="20" height="20" viewBox="0 0 20 20"><g fill="none" stroke="#1a1a1a" stroke-width="1.7"><ellipse cx="13" cy="6.9" rx="4.6" ry="3.3" transform="rotate(45 13 6.9)"/><ellipse cx="7" cy="11.7" rx="4.6" ry="3.3" transform="rotate(45 7 11.7)"/><path d="M16.3 3.7l1.6-1.6M3.7 15l-1.4 1.8"/></g></svg>
<div class="r" style="left:1212.5px;top:73.5px;width:31.1px;height:24.8px;background:#fff;border:1px solid #dcdfe5;border-radius:4px;box-sizing:border-box;"></div>
<svg class="r" style="left:1220.0px;top:77.0px;" width="18" height="18" viewBox="0 0 18 18"><path d="M8.6 2.9A5.3 5.3 0 0 1 10 13.3" fill="none" stroke="#1a1a1a" stroke-width="1.8"/><circle cx="8.3" cy="3.3" r="1.7" fill="#1a1a1a"/><circle cx="3.6" cy="6.4" r="0.95" fill="#222"/><circle cx="3.4" cy="10.2" r="0.95" fill="#222"/><circle cx="6.5" cy="13.3" r="1.05" fill="#222"/></svg>
<div class="r" style="left:304.8px;top:104.3px;width:80.8px;height:25.7px;background:#fff;border:1px solid #dcdfe5;border-radius:4px;box-sizing:border-box;"></div>
<div class="r" style="left:335.2px;top:105.5px;width:1.0px;height:24.0px;background:#dcdfe5;"></div>
<div class="r" style="left:368.0px;top:105.5px;width:1.0px;height:24.0px;background:#dcdfe5;"></div>
<div class="r" style="left:391.3px;top:104.3px;width:43.7px;height:25.7px;background:#fff;border:1px solid #dcdfe5;border-radius:4px;box-sizing:border-box;"></div>
<div class="r" style="left:441.0px;top:104.3px;width:48.5px;height:25.7px;background:#fff;border:1px solid #dcdfe5;border-radius:4px;box-sizing:border-box;"></div>
<div class="r" style="left:472.0px;top:105.5px;width:1.0px;height:24.0px;background:#dcdfe5;"></div>
<div class="r" style="left:495.6px;top:104.3px;width:104.2px;height:25.7px;background:#f2f3f7;border:1px solid #e6e8ec;border-radius:4px;box-sizing:border-box;"></div>
<div class="r" style="left:605.4px;top:104.3px;width:80.2px;height:25.7px;background:#fff;border:1px solid #dcdfe5;border-radius:4px;box-sizing:border-box;"></div>
<div class="r" style="left:636.4px;top:105.5px;width:1.0px;height:24.0px;background:#dcdfe5;"></div>
<div class="r" style="left:666.8px;top:105.5px;width:1.0px;height:24.0px;background:#dcdfe5;"></div>
<div class="r" style="left:691.0px;top:104.3px;width:80.2px;height:25.7px;background:#fff;border:1px solid #dcdfe5;border-radius:4px;box-sizing:border-box;"></div>
<div class="r" style="left:722.7px;top:105.5px;width:1.0px;height:24.0px;background:#dcdfe5;"></div>
<div class="r" style="left:754.0px;top:105.5px;width:1.0px;height:24.0px;background:#dcdfe5;"></div>
<div class="r" style="left:777.4px;top:104.3px;width:62.6px;height:25.7px;background:#f3f4f7;border:1px solid #dcdfe5;border-radius:4px;box-sizing:border-box;"></div>
<div class="r" style="left:808.2px;top:105.5px;width:1.0px;height:24.0px;background:#dcdfe5;"></div>
<div class="r" style="left:845.6px;top:104.3px;width:43.5px;height:25.7px;background:#fff;border:1px solid #dcdfe5;border-radius:4px;box-sizing:border-box;"></div>
<div class="r" style="left:894.8px;top:104.3px;width:30.4px;height:25.7px;background:#fff;border:1px solid #dcdfe5;border-radius:4px;box-sizing:border-box;"></div>
<svg class="r" style="left:312.4px;top:111.4px;" width="16" height="13" viewBox="0 0 16 13"><path d="M0 1.5C0 .7.7 0 1.5 0h4l1.8 2H14.5c.8 0 1.5.7 1.5 1.5v8c0 .8-.7 1.5-1.5 1.5h-13C.7 13 0 12.3 0 11.5z" fill="#1a1a1a"/></svg>
<svg class="r" style="left:345.0px;top:111.0px;" width="14" height="14" viewBox="0 0 14 14"><path d="M0 1.5C0 .7.7 0 1.5 0H10l4 4v8.5c0 .8-.7 1.5-1.5 1.5h-11C.7 14 0 13.3 0 12.5z" fill="#1a1a1a"/><rect x="2.5" y="1.8" width="7" height="3.2" fill="#fff"/><circle cx="7" cy="9.8" r="2" fill="#fff"/></svg>
<svg class="r" style="left:371.6px;top:114.5px;" width="11" height="8" viewBox="0 0 11 8"><polyline points="1.5,1.5 5.5,5.5 9.5,1.5" fill="none" stroke="#333" stroke-width="1.7"/></svg>
<svg class="r" style="left:399.4px;top:110.7px;" width="15" height="14" viewBox="0 0 15 14"><path d="M1 13l1-3.5 8-8 2.5 2.5-8 8z" fill="#1a1a1a"/><path d="M11 1l1-1 2.5 2.5-1 1z" fill="#1a1a1a"/></svg>
<svg class="r" style="left:414.5px;top:114.5px;" width="11" height="8" viewBox="0 0 11 8"><polyline points="1.5,1.5 5.5,5.5 9.5,1.5" fill="none" stroke="#333" stroke-width="1.7"/></svg>
<svg class="r" style="left:449.5px;top:111.0px;" width="13" height="13" viewBox="0 0 13 13"><path d="M0 0h13l-5 6v7l-3-2V6z" fill="#555"/></svg>
<svg class="r" style="left:475.7px;top:114.5px;" width="11" height="8" viewBox="0 0 11 8"><polyline points="1.5,1.5 5.5,5.5 9.5,1.5" fill="none" stroke="#555" stroke-width="1.7"/></svg>
<div class="t" style="left:506.5px;top:111.0px;font:normal 13.5px/13.5px 'Liberation Sans',sans-serif;color:#8a8f99;">No limit</div>
<svg class="r" style="left:578.0px;top:116.0px;" width="9" height="5" viewBox="0 0 9 5"><path d="M0 0h9l-4.5 5z" fill="#555"/></svg>
<div class="r" style="left:614.7px;top:112.0px;width:12.1px;height:11.4px;background:#777;border-radius:2px;"></div>
<svg class="r" style="left:647.8px;top:111.7px;" width="10" height="12.2" viewBox="0 0 10 12.2"><path d="M0 0l10 6.1L0 12.2z" fill="#111"/></svg>
<svg class="r" style="left:671.7px;top:114.5px;" width="11" height="8" viewBox="0 0 11 8"><polyline points="1.5,1.5 5.5,5.5 9.5,1.5" fill="none" stroke="#333" stroke-width="1.7"/></svg>
<div class="r" style="left:699.9px;top:111.0px;width:14.1px;height:13.5px;background:#1a1a1a;border-radius:2px;"></div>
<div class="t" style="left:704.0px;top:113.8px;font:bold 10px/10px 'Liberation Sans',sans-serif;color:#fff;">E</div>
<svg class="r" style="left:731.2px;top:111.0px;" width="14" height="13.5" viewBox="0 0 14 13.5"><rect width="14" height="13.5" rx="2" fill="#1a1a1a"/><rect x="4" y="4" width="1.6" height="6" fill="#fff"/><rect x="6.6" y="6" width="1.6" height="4" fill="#fff"/><rect x="9.2" y="8" width="1.6" height="2" fill="#fff"/></svg>
<svg class="r" style="left:757.3px;top:114.5px;" width="11" height="8" viewBox="0 0 11 8"><polyline points="1.5,1.5 5.5,5.5 9.5,1.5" fill="none" stroke="#333" stroke-width="1.7"/></svg>
<svg class="r" style="left:784.3px;top:109.5px;" width="17" height="17" viewBox="0 0 17 17"><ellipse cx="6.5" cy="3" rx="6" ry="2.4" fill="#777"/><path d="M0.5 3v9c0 1.3 2.7 2.4 6 2.4s6-1.1 6-2.4V3" fill="#777"/><path d="M0.5 6.3c0 1.3 2.7 2.4 6 2.4s6-1.1 6-2.4M0.5 9.5c0 1.3 2.7 2.4 6 2.4s6-1.1 6-2.4" stroke="#f3f4f7" stroke-width="1" fill="none"/><circle cx="11.5" cy="12" r="4.3" fill="#777" stroke="#f3f4f7" stroke-width="1"/><path d="M9.5 12l1.5 1.5 2.5-2.5" stroke="#f3f4f7" stroke-width="1.2" fill="none"/></svg>
<svg class="r" style="left:815.6px;top:109.5px;" width="17" height="17" viewBox="0 0 17 17"><ellipse cx="6.5" cy="3" rx="6" ry="2.4" fill="#777"/><path d="M0.5 3v9c0 1.3 2.7 2.4 6 2.4s6-1.1 6-2.4V3" fill="#777"/><path d="M0.5 6.3c0 1.3 2.7 2.4 6 2.4s6-1.1 6-2.4M0.5 9.5c0 1.3 2.7 2.4 6 2.4s6-1.1 6-2.4" stroke="#f3f4f7" stroke-width="1" fill="none"/><circle cx="11.5" cy="12" r="4.3" fill="#777" stroke="#f3f4f7" stroke-width="1"/><path d="M10 13.5a2 2 0 1 0 0-3" stroke="#f3f4f7" stroke-width="1.1" fill="none"/></svg>
<svg class="r" style="left:852.7px;top:111.7px;" width="15" height="12" viewBox="0 0 15 12"><g fill="#333"><rect x="0" y="0" width="2" height="2"/><rect x="4" y="0" width="11" height="2"/><rect x="0" y="5" width="2" height="2"/><rect x="4" y="5" width="11" height="2"/><rect x="0" y="10" width="2" height="2"/><rect x="4" y="10" width="11" height="2"/></g></svg>
<svg class="r" style="left:869.0px;top:114.5px;" width="11" height="8" viewBox="0 0 11 8"><polyline points="1.5,1.5 5.5,5.5 9.5,1.5" fill="none" stroke="#333" stroke-width="1.7"/></svg>
<svg class="r" style="left:902.7px;top:110.0px;" width="16" height="16" viewBox="0 0 16 16"><circle cx="8" cy="8" r="8" fill="#1a1a1a"/><text x="8" y="12.5" text-anchor="middle" font-family="Liberation Sans" font-weight="bold" font-size="12" fill="#fff">?</text></svg>
<div class="r" style="left:300.5px;top:135.5px;width:943.5px;height:29.5px;background:#fff;"></div>
<div class="t" style="left:310.0px;top:142.4px;font:normal 13px/13px 'Liberation Sans',sans-serif;color:#555;">Query</div>
<div class="t" style="left:364.8px;top:142.4px;font:normal 13px/13px 'Liberation Sans',sans-serif;color:#555;">Query History</div>
<div class="r" style="left:300.5px;top:161.0px;width:53.3px;height:3.2px;background:#3d6890;"></div>
<div class="r" style="left:300.5px;top:164.5px;width:755.5px;height:1.0px;background:#eceef1;"></div>
<div class="r" style="left:1056.0px;top:164.5px;width:188.0px;height:1.0px;background:#eceef1;"></div>
<div class="r" style="left:1055.5px;top:135.5px;width:1.0px;height:290.5px;background:#eceef1;"></div>
<div class="t" style="left:1066.3px;top:141.8px;font:normal 13px/13px 'Liberation Sans',sans-serif;color:#555;transform:scaleX(1.0390);transform-origin:0 0;">Scratch Pad</div>
<svg class="r" style="left:1152.3px;top:143.3px;" width="7" height="7" viewBox="0 0 7 7"><path d="M0.5 0.5l6 6M6.5 0.5l-6 6" stroke="#333" stroke-width="1.4"/></svg>
<div class="r" style="left:1057.0px;top:161.0px;width:115.3px;height:3.2px;background:#4f7396;border-radius:1.5px;"></div>
<svg class="r" style="left:1028.0px;top:141.8px;" width="16" height="16" viewBox="0 0 16 16"><path d="M3.5 12.3L11.7 4.1" stroke="#1a1a1a" stroke-width="1.4"/><path d="M1.2 14.4V9.6l4.8 4.6z M13.9 1.5l-4.7.1 4.7 4.6z" fill="#1a1a1a"/></svg>
<svg class="r" style="left:1219.5px;top:141.8px;" width="16" height="16" viewBox="0 0 16 16"><path d="M3.5 12.3L11.7 4.1" stroke="#1a1a1a" stroke-width="1.4"/><path d="M1.2 14.4V9.6l4.8 4.6z M13.9 1.5l-4.7.1 4.7 4.6z" fill="#1a1a1a"/></svg>
<div class="r" style="left:300.5px;top:165.5px;width:39.5px;height:258.5px;background:#f0f1f5;"></div>
<div class="r" style="left:340.0px;top:165.5px;width:715.5px;height:260.5px;background:#fff;"></div>
<div class="t" style="left:317.9px;top:172.9px;font:normal 13.5px/13.5px 'Liberation Mono',monospace;color:#808080;-webkit-text-stroke:0;">1</div>
<div class="t" style="left:317.9px;top:192.0px;font:normal 13.5px/13.5px 'Liberation Mono',monospace;color:#808080;-webkit-text-stroke:0;">2</div>
<div class="t" style="left:317.9px;top:211.1px;font:normal 13.5px/13.5px 'Liberation Mono',monospace;color:#808080;-webkit-text-stroke:0;">3</div>
<div class="t" style="left:317.9px;top:230.3px;font:normal 13.5px/13.5px 'Liberation Mono',monospace;color:#808080;-webkit-text-stroke:0;">4</div>
<div class="t" style="left:317.9px;top:249.4px;font:normal 13.5px/13.5px 'Liberation Mono',monospace;color:#808080;-webkit-text-stroke:0;">5</div>
<div class="t" style="left:317.9px;top:268.5px;font:normal 13.5px/13.5px 'Liberation Mono',monospace;color:#808080;-webkit-text-stroke:0;">6</div>
<div class="t" style="left:317.9px;top:287.7px;font:normal 13.5px/13.5px 'Liberation Mono',monospace;color:#808080;-webkit-text-stroke:0;">7</div>
<div class="t" style="left:317.9px;top:306.8px;font:normal 13.5px/13.5px 'Liberation Mono',monospace;color:#808080;-webkit-text-stroke:0;">8</div>
<div class="t" style="left:317.9px;top:325.9px;font:normal 13.5px/13.5px 'Liberation Mono',monospace;color:#808080;-webkit-text-stroke:0;">9</div>
<div class="t" style="left:309.8px;top:345.0px;font:normal 13.5px/13.5px 'Liberation Mono',monospace;color:#808080;-webkit-text-stroke:0;">10</div>
<div class="t" style="left:309.8px;top:364.2px;font:normal 13.5px/13.5px 'Liberation Mono',monospace;color:#808080;-webkit-text-stroke:0;">11</div>
<div class="t" style="left:309.8px;top:383.3px;font:normal 13.5px/13.5px 'Liberation Mono',monospace;color:#808080;-webkit-text-stroke:0;">12</div>
<svg class="r" style="left:328.0px;top:290.5px;" width="7" height="6" viewBox="0 0 7 6"><path d="M0 0h7l-3.5 5z" fill="#888"/></svg>
<div class="t" style="left:344.8px;top:172.9px;font:normal 13.5px/13.5px 'Liberation Mono',monospace;color:#5a5a5a;-webkit-text-stroke:0;"><span style="color:#9a3a9e;font-weight:bold;">CREATE FUNCTION</span><span style="color:#5a5a5a;"> execom(</span><span style="color:#5c5cb6;">text</span><span style="color:#5a5a5a;">)</span></div>
<div class="t" style="left:344.8px;top:192.0px;font:normal 13.5px/13.5px 'Liberation Mono',monospace;color:#5a5a5a;-webkit-text-stroke:0;"><span style="color:#9a3a9e;font-weight:bold;">    RETURNS</span><span style="color:#5a5a5a;"> </span><span style="color:#5c5cb6;">text</span></div>
<div class="t" style="left:344.8px;top:211.1px;font:normal 13.5px/13.5px 'Liberation Mono',monospace;color:#5a5a5a;-webkit-text-stroke:0;"><span style="color:#9a3a9e;font-weight:bold;">    LANGUAGE</span><span style="color:#5a5a5a;"> </span><span style="color:#b35a55;">&#x27;plpgsql&#x27;</span></div>
<div class="t" style="left:344.8px;top:230.3px;font:normal 13.5px/13.5px 'Liberation Mono',monospace;color:#5a5a5a;-webkit-text-stroke:0;"><span style="color:#9a3a9e;font-weight:bold;">    COST</span><span style="color:#5a5a5a;"> </span><span style="color:#a88a4e;">100</span></div>
<div class="t" style="left:344.8px;top:249.4px;font:normal 13.5px/13.5px 'Liberation Mono',monospace;color:#5a5a5a;-webkit-text-stroke:0;"><span style="color:#9a3a9e;font-weight:bold;">    VOLATILE PARALLEL</span><span style="color:#5a5a5a;"> UNSAFE</span></div>
<div class="t" style="left:344.8px;top:268.5px;font:normal 13.5px/13.5px 'Liberation Mono',monospace;color:#5a5a5a;-webkit-text-stroke:0;"><span style="color:#9a3a9e;font-weight:bold;">AS</span><span style="color:#5a5a5a;"> $BODY$</span></div>
<div class="t" style="left:344.8px;top:287.7px;font:normal 13.5px/13.5px 'Liberation Mono',monospace;color:#5a5a5a;-webkit-text-stroke:0;"><span style="color:#9a3a9e;font-weight:bold;">BEGIN</span></div>
<div class="t" style="left:344.8px;top:306.8px;font:normal 13.5px/13.5px 'Liberation Mono',monospace;color:#5a5a5a;-webkit-text-stroke:0;"><span style="color:#9a3a9e;font-weight:bold;">    EXECUTE</span><span style="color:#5a5a5a;"> $1;</span></div>
<div class="t" style="left:344.8px;top:325.9px;font:normal 13.5px/13.5px 'Liberation Mono',monospace;color:#5a5a5a;-webkit-text-stroke:0;"><span style="color:#9a3a9e;font-weight:bold;">    RETURN</span><span style="color:#5a5a5a;"> </span><span style="color:#b35a55;">&#x27;ok&#x27;</span><span style="color:#5a5a5a;">;</span></div>
<div class="t" style="left:344.8px;top:345.0px;font:normal 13.5px/13.5px 'Liberation Mono',monospace;color:#5a5a5a;-webkit-text-stroke:0;"><span style="color:#9a3a9e;font-weight:bold;">END</span><span style="color:#5a5a5a;">;</span></div>
<div class="t" style="left:344.8px;top:364.2px;font:normal 13.5px/13.5px 'Liberation Mono',monospace;color:#5a5a5a;-webkit-text-stroke:0;"><span style="color:#5a5a5a;">$BODY$;</span></div>
<div class="r" style="left:300.5px;top:425.5px;width:943.5px;height:2.0px;background:#e8eaee;"></div>
<div class="r" style="left:300.5px;top:427.5px;width:943.5px;height:278.5px;background:#fff;"></div>
<div class="t" style="left:309.5px;top:435.3px;font:normal 13px/13px 'Liberation Sans',sans-serif;color:#555;transform:scaleX(1.0420);transform-origin:0 0;">Data Output</div>
<div class="t" style="left:401.4px;top:435.3px;font:normal 13px/13px 'Liberation Sans',sans-serif;color:#555;transform:scaleX(1.0620);transform-origin:0 0;">Messages</div>
<div class="t" style="left:483.2px;top:435.3px;font:normal 13px/13px 'Liberation Sans',sans-serif;color:#555;transform:scaleX(1.1100);transform-origin:0 0;">Notifications</div>
<div class="r" style="left:392.0px;top:453.0px;width:82.0px;height:3.0px;background:#2f5c88;border-radius:1.5px;"></div>
<div class="r" style="left:300.5px;top:456.0px;width:943.5px;height:1.0px;background:#eceef1;"></div>
<svg class="r" style="left:1219.5px;top:434.0px;" width="16" height="16" viewBox="0 0 16 16"><path d="M3.5 12.3L11.7 4.1" stroke="#1a1a1a" stroke-width="1.4"/><path d="M1.2 14.4V9.6l4.8 4.6z M13.9 1.5l-4.7.1 4.7 4.6z" fill="#1a1a1a"/></svg>
<div class="t" style="left:310.0px;top:465.3px;font:normal 12.5px/12.5px 'Liberation Mono',monospace;color:#555;transform:scaleX(0.9300);transform-origin:0 0;-webkit-text-stroke:0;">CREATE FUNCTION</div>
<div class="t" style="left:310.0px;top:497.6px;font:normal 12.5px/12.5px 'Liberation Mono',monospace;color:#555;transform:scaleX(0.9300);transform-origin:0 0;-webkit-text-stroke:0;">Query returned successfully in 75 msec.</div>
<div class="r" style="left:632.0px;top:99.1px;width:39.3px;height:38.5px;border:2px solid #d9534a;border-radius:3px;box-sizing:border-box;"></div>
<div class="r" style="left:338.5px;top:160.7px;width:249.5px;height:226.1px;border:2px solid #d9534a;border-radius:3px;box-sizing:border-box;"></div>
<div class="r" style="left:301.3px;top:458.4px;width:319.4px;height:70.0px;border:2px solid #d9534a;border-radius:3px;box-sizing:border-box;"></div>
<div class="r" style="left:127.3px;top:641.7px;width:140.9px;height:27.0px;border:2px solid #d9534a;border-radius:3px;box-sizing:border-box;"></div>
<svg class="r" style="left:0;top:0" width="1262" height="724" viewBox="0 0 1262 724">
<line x1="596.3" y1="230.3" x2="624" y2="160" stroke="#3b78c0" stroke-width="3" stroke-linecap="round"/>
<polygon points="631.7,144.1 633.4,165.2 624.5,158.5 614.5,158.5" fill="#3b78c0"/>
<line x1="647.2" y1="146.3" x2="612.3" y2="440" stroke="#3b78c0" stroke-width="3" stroke-linecap="round"/>
<polygon points="610,455.9 602.1,434.7 612,440 622.5,437.5" fill="#3b78c0"/>
<line x1="419" y1="538.8" x2="283" y2="642" stroke="#3b78c0" stroke-width="3" stroke-linecap="round"/>
<polygon points="272.1,648.1 282,630.4 284,640 294.2,644.8" fill="#3b78c0"/>
<line x1="283.3" y1="645" x2="283.3" y2="665" stroke="#4a72a0" stroke-width="3"/>
</svg>
</div></body></html>
